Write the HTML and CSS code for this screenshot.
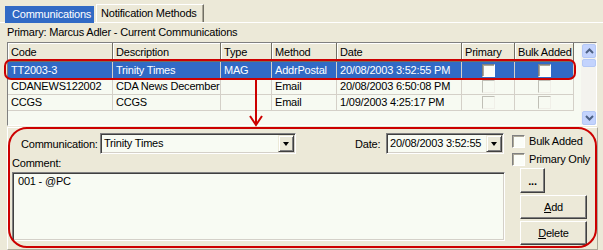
FILE: index.html
```html
<!DOCTYPE html>
<html lang="en">
<head>
    <meta charset="UTF-8">
    <title>Communications</title>
    <link rel="stylesheet" href="styles.css">
</head>
<body>
    <div class="window">
        <div class="tabs">
            <div class="tab active">Communications</div>
            <div class="tab">Notification Methods</div>
        </div>

        <div class="caption">Primary: Marcus Adler - Current Communications</div>

        <div class="grid">
            <div class="grid-body">
                <div class="grid-row head">
                    <div class="cell">Code</div>
                    <div class="cell">Description</div>
                    <div class="cell">Type</div>
                    <div class="cell">Method</div>
                    <div class="cell">Date</div>
                    <div class="cell">Primary</div>
                    <div class="cell">Bulk Added</div>
                </div>
                <div class="grid-row selected first">
                    <div class="cell">TT2003-3</div>
                    <div class="cell">Trinity Times</div>
                    <div class="cell">MAG</div>
                    <div class="cell">AddrPostal</div>
                    <div class="cell">20/08/2003 3:52:55 PM</div>
                    <div class="cell center"><span class="check"></span></div>
                    <div class="cell center"><span class="check"></span></div>
                </div>
                <div class="grid-row">
                    <div class="cell">CDANEWS122002</div>
                    <div class="cell">CDA News December</div>
                    <div class="cell"></div>
                    <div class="cell">Email</div>
                    <div class="cell">20/08/2003 6:50:08 PM</div>
                    <div class="cell center"><span class="check off"></span></div>
                    <div class="cell center"><span class="check off"></span></div>
                </div>
                <div class="grid-row">
                    <div class="cell">CCGS</div>
                    <div class="cell">CCGS</div>
                    <div class="cell"></div>
                    <div class="cell">Email</div>
                    <div class="cell">1/09/2003 4:25:17 PM</div>
                    <div class="cell center"><span class="check off"></span></div>
                    <div class="cell center"><span class="check off"></span></div>
                </div>
            </div>
            <div class="scrollbar">
                <div class="sb-button">
                    <svg width="9" height="6" viewBox="0 0 9 6"><path d="M1 5 L4.5 1.5 L8 5" fill="none" stroke="#4d6185" stroke-width="2"/></svg>
                </div>
                <div class="sb-thumb"></div>
                <div class="sb-track"></div>
                <div class="sb-button">
                    <svg width="9" height="6" viewBox="0 0 9 6"><path d="M1 1 L4.5 4.5 L8 1" fill="none" stroke="#4d6185" stroke-width="2"/></svg>
                </div>
            </div>
        </div>

        <div class="editor">
            <div class="editor-main">
                <div class="top-row">
                    <span class="label comm-label">Communication:</span>
                    <div class="combo comm-combo">
                        <span class="combo-text">Trinity Times</span>
                        <span class="drop"></span>
                    </div>
                    <span class="label date-label">Date:</span>
                    <div class="combo date-combo">
                        <span class="combo-text">20/08/2003 3:52:55</span>
                        <span class="drop"></span>
                    </div>
                </div>
                <div class="comment-label">Comment:</div>
                <div class="comment">001 - @PC</div>
            </div>
            <div class="editor-side">
                <div class="check-line"><span class="check"></span>Bulk Added</div>
                <div class="check-line"><span class="check"></span>Primary Only</div>
                <button class="btn small">...</button>
                <button class="btn"><u>A</u>dd</button>
                <button class="btn"><u>D</u>elete</button>
            </div>
        </div>

        <!-- red call-outs drawn over the screenshot -->
        <svg class="callouts" width="603" height="250" viewBox="0 0 603 250">
            <rect x="5" y="60" width="570" height="19" rx="6" fill="none" stroke="#cc0000" stroke-width="2"/>
            <line x1="256" y1="80" x2="256" y2="125" stroke="#cc0000" stroke-width="2"/>
            <polyline points="250,116 256,125 262,116" fill="none" stroke="#cc0000" stroke-width="2"/>
            <rect x="9" y="128" width="587" height="119" rx="18" fill="none" stroke="#cc0000" stroke-width="2"/>
        </svg>
    </div>
</body>
</html>
```

FILE: styles.css
```css
body {
    margin: 0;
    font-family: "Liberation Sans", Arial, sans-serif;
    font-size: 11px;
    letter-spacing: -0.2px;
    color: #000;
}

.window {
    position: relative;
    width: 603px;
    height: 250px;
    background-color: #ece9d8;
    overflow: hidden;
}

/* tabs */
.tabs {
    display: flex;
    align-items: flex-end;
    height: 23px;
    padding-left: 5px;
    box-sizing: border-box;
    border-bottom: 1px solid #fff;
}

.tab {
    box-sizing: border-box;
    height: 18px;
    width: 108px;
    margin-left: 2px;
    padding-left: 4px;
    line-height: 17px;
    border-top: 1px solid #fff;
    border-left: 1px solid #fff;
    border-right: 1px solid #716f64;
    box-shadow: inset -1px 0 #aca899;
}

.tab.active {
    width: 89px;
    height: 17px;
    margin-left: 0;
    margin-bottom: -1px;
    padding-left: 7px;
    line-height: 16px;
    border: none;
    box-shadow: none;
    background-color: #316ac5;
    color: #fff;
}

.caption {
    height: 19px;
    line-height: 19px;
    padding-left: 7px;
}

/* grid */
.grid {
    display: flex;
    width: 590px;
    height: 84px;
    margin-left: 7px;
    box-sizing: border-box;
    border: 1px solid;
    border-color: #808080 #fff #fff #808080;
    background-color: #f7faf2;
}

.grid-body {
    flex: 1;
}

.grid-row {
    display: grid;
    grid-template-columns: 105px 108px 51px 65px 125px 53px 59px;
    height: 16px;
}

.grid-row .cell {
    box-sizing: border-box;
    border-right: 1px solid #d4d0c8;
    border-bottom: 1px solid #d4d0c8;
    padding-left: 3px;
    line-height: 15px;
    white-space: nowrap;
    overflow: hidden;
}

.grid-row.head {
    height: 19px;
}

.grid-row.head .cell {
    background-color: #ece9d8;
    border-right: 1px solid #716f64;
    border-bottom: 1px solid #716f64;
    box-shadow: inset 1px 1px #fff;
    line-height: 18px;
}

.grid-row.first {
    height: 17px;
}

.grid-row.first .cell {
    line-height: 16px;
}

.grid-row.selected .cell {
    background-color: #316ac5;
    color: #fff;
}

.cell.center {
    display: flex;
    justify-content: center;
    align-items: center;
    padding-left: 0;
}

.check {
    display: inline-block;
    flex-shrink: 0;
    box-sizing: border-box;
    width: 13px;
    height: 13px;
    border: 1px solid;
    border-color: #808080 #fff #fff #808080;
    box-shadow: inset 1px 1px #aca899;
    background-color: #fbfdf8;
}

.check.off {
    border-color: #c0bfb6 #f0efe8 #f0efe8 #c0bfb6;
    box-shadow: none;
    background-color: #f7faf2;
}

.scrollbar {
    display: flex;
    flex-direction: column;
    width: 15px;
    background-color: #f4f3ee;
}

.sb-button,
.sb-thumb {
    box-sizing: border-box;
    margin: 1px 0 0 1px;
    width: 14px;
    border: 1px solid #b4c8f6;
    border-radius: 2px;
    background-color: #c3d3fd;
}

.sb-button {
    height: 14px;
    display: flex;
    justify-content: center;
    align-items: center;
}

.sb-thumb {
    height: 8px;
}

.sb-track {
    flex: 1;
}

/* editor panel */
.editor {
    display: flex;
    width: 591px;
    height: 123px;
    margin: 1px 0 0 7px;
    box-sizing: border-box;
    padding: 5px 0 0 4px;
    border: 1px solid;
    border-color: #fff #aca899 #aca899 #fff;
}

.editor-main {
    width: 494px;
}

.top-row {
    display: flex;
    align-items: center;
    height: 21px;
}

.comm-label {
    margin-left: 9px;
    width: 79px;
}

.combo {
    position: relative;
    box-sizing: border-box;
    height: 21px;
    padding-left: 3px;
    line-height: 18px;
    border: 1px solid;
    border-color: #808080 #fff #fff #808080;
    box-shadow: inset 1px 1px #404040, inset -1px -1px #d4d0c8;
    background-color: #f8fbf3;
    white-space: nowrap;
    overflow: hidden;
}

.comm-combo {
    width: 196px;
}

.date-label {
    margin-left: 59px;
    width: 31px;
}

.date-combo {
    width: 118px;
}

.drop {
    position: absolute;
    top: 1px;
    right: 1px;
    width: 16px;
    height: 17px;
    box-sizing: border-box;
    border: 1px solid;
    border-color: #ece9d8 #404040 #404040 #ece9d8;
    box-shadow: inset 1px 1px #fff, inset -1px -1px #808080;
    background-color: #ece9d8;
}

.drop::after {
    content: "";
    position: absolute;
    left: 4px;
    top: 6px;
    border-left: 3px solid transparent;
    border-right: 3px solid transparent;
    border-top: 4px solid #000;
}

.comment-label {
    height: 18px;
    line-height: 18px;
}

.comment {
    box-sizing: border-box;
    width: 493px;
    height: 69px;
    padding: 2px 0 0 5px;
    border: 1px solid;
    border-color: #808080 #fff #fff #808080;
    box-shadow: inset 1px 1px #404040, inset -1px -1px #d4d0c8;
    background-color: #f8fbf3;
}

.editor-side {
    display: flex;
    flex-direction: column;
    align-items: flex-start;
    margin-left: 6px;
    padding-top: 2px;
}

.check-line {
    display: flex;
    align-items: center;
    height: 13px;
    line-height: 13px;
}

.check-line + .check-line {
    margin-top: 5px;
}

.check-line .check {
    margin-right: 4px;
}

.btn {
    box-sizing: border-box;
    width: 67px;
    height: 24px;
    margin: 2px 0 0 8px;
    padding: 0;
    font-family: inherit;
    font-size: 11px;
    letter-spacing: -0.2px;
    color: #000;
    background-color: #ece9d8;
    border: 1px solid;
    border-color: #fff #404040 #404040 #fff;
    box-shadow: inset -1px -1px #808080;
}

.btn.small {
    width: 25px;
    height: 25px;
    font-weight: bold;
}

.callouts {
    position: absolute;
    top: 0;
    left: 0;
    pointer-events: none;
}
```
